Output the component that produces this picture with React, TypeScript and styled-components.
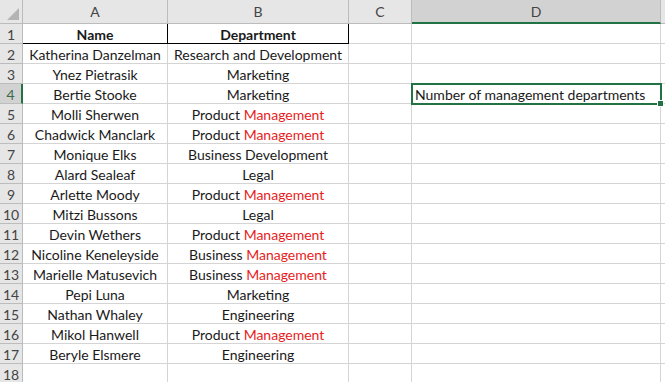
import React from "react";
import styled, { createGlobalStyle } from "styled-components";

const GlobalStyle = createGlobalStyle`
  html, body {
    margin: 0;
    padding: 0;
    background: #ffffff;
    overflow: hidden;
  }
`;

type Row = { name: string; dept: string; red?: string };

const rows: Row[] = [
  { name: "Katherina Danzelman", dept: "Research and Development" },
  { name: "Ynez Pietrasik", dept: "Marketing" },
  { name: "Bertie Stooke", dept: "Marketing" },
  { name: "Molli Sherwen", dept: "Product ", red: "Management" },
  { name: "Chadwick Manclark", dept: "Product ", red: "Management" },
  { name: "Monique Elks", dept: "Business Development" },
  { name: "Alard Sealeaf", dept: "Legal" },
  { name: "Arlette Moody", dept: "Product ", red: "Management" },
  { name: "Mitzi Bussons", dept: "Legal" },
  { name: "Devin Wethers", dept: "Product ", red: "Management" },
  { name: "Nicoline Keneleyside", dept: "Business ", red: "Management" },
  { name: "Marielle Matusevich", dept: "Business ", red: "Management" },
  { name: "Pepi Luna", dept: "Marketing" },
  { name: "Nathan Whaley", dept: "Engineering" },
  { name: "Mikol Hanwell", dept: "Product ", red: "Management" },
  { name: "Beryle Elsmere", dept: "Engineering" },
];

const Sheet = styled.div`
  display: grid;
  grid-template-columns: 23px 145px 181px 63px 249px 1fr;
  grid-template-rows: 24px;
  grid-auto-rows: 20px;
  width: 665px;
  height: 382px;
  overflow: hidden;
  font-family: Lato, "Liberation Sans", sans-serif;
  font-size: 14px;
  color: #1a1a1a;
`;

const Corner = styled.div`
  position: relative;
  background: #e6e6e6;
  border-right: 1px solid #bcbcbc;
  border-bottom: 1px solid #bcbcbc;

  &::after {
    content: "";
    position: absolute;
    right: 3px;
    bottom: 3px;
    width: 0;
    height: 0;
    border-left: 12px solid transparent;
    border-bottom: 12px solid #b4b4b4;
  }
`;

const ColHead = styled.div<{ $active?: boolean }>`
  display: flex;
  align-items: center;
  justify-content: center;
  box-sizing: border-box;
  background: ${(p) => (p.$active ? "#d2d2d2" : "#e6e6e6")};
  border-right: 1px solid #bcbcbc;
  border-bottom: ${(p) => (p.$active ? "2px solid #217346" : "1px solid #bcbcbc")};
  color: #444444;
  padding-top: ${(p) => (p.$active ? "1px" : "0")};
`;

const RowHead = styled.div<{ $active?: boolean }>`
  display: flex;
  align-items: flex-end;
  justify-content: center;
  box-sizing: border-box;
  background: ${(p) => (p.$active ? "#d2d2d2" : "#e6e6e6")};
  border-right: ${(p) => (p.$active ? "2px solid #217346" : "1px solid #bcbcbc")};
  border-bottom: 1px solid #bcbcbc;
  color: ${(p) => (p.$active ? "#3b6b4c" : "#444444")};
  line-height: 16px;
`;

const Cell = styled.div<{ $align?: "left" | "center"; $bold?: boolean; $boxed?: boolean }>`
  display: flex;
  align-items: flex-end;
  justify-content: ${(p) => (p.$align === "left" ? "flex-start" : "center")};
  box-sizing: border-box;
  padding: 0 3px;
  white-space: nowrap;
  line-height: 16px;
  font-weight: ${(p) => (p.$bold ? 700 : 400)};
  border-right: 1px solid ${(p) => (p.$boxed ? "#000000" : "#d4d4d4")};
  border-bottom: 1px solid ${(p) => (p.$boxed ? "#000000" : "#d4d4d4")};
`;

const ActiveCell = styled(Cell)`
  position: relative;
  overflow: visible;
  outline: 2px solid #217346;
  outline-offset: -1px;
  z-index: 1;

  &::after {
    content: "";
    position: absolute;
    right: -4px;
    bottom: -4px;
    width: 5px;
    height: 5px;
    background: #217346;
    border: 1px solid #ffffff;
  }
`;

const Red = styled.span`
  color: #e81c1c;
  white-space: pre;
`;

const Plain = styled.span`
  white-space: pre;
`;

export default function App() {
  return (
    <>
      <GlobalStyle />
      <Sheet>
        <Corner />
        <ColHead>A</ColHead>
        <ColHead>B</ColHead>
        <ColHead>C</ColHead>
        <ColHead $active>D</ColHead>
        <ColHead />

        <RowHead>1</RowHead>
        <Cell $bold $boxed>Name</Cell>
        <Cell $bold $boxed>Department</Cell>
        <Cell />
        <Cell />
        <Cell />

        {rows.map((r, i) => {
          const n = i + 2;
          return (
            <React.Fragment key={n}>
              <RowHead $active={n === 4}>{n}</RowHead>
              <Cell>{r.name}</Cell>
              <Cell>
                <Plain>{r.dept}</Plain>
                {r.red && <Red>{r.red}</Red>}
              </Cell>
              <Cell />
              {n === 4 ? (
                <ActiveCell $align="left">Number of management departments</ActiveCell>
              ) : (
                <Cell />
              )}
              <Cell />
            </React.Fragment>
          );
        })}

        <RowHead>18</RowHead>
        <Cell />
        <Cell />
        <Cell />
        <Cell />
        <Cell />
      </Sheet>
    </>
  );
}
